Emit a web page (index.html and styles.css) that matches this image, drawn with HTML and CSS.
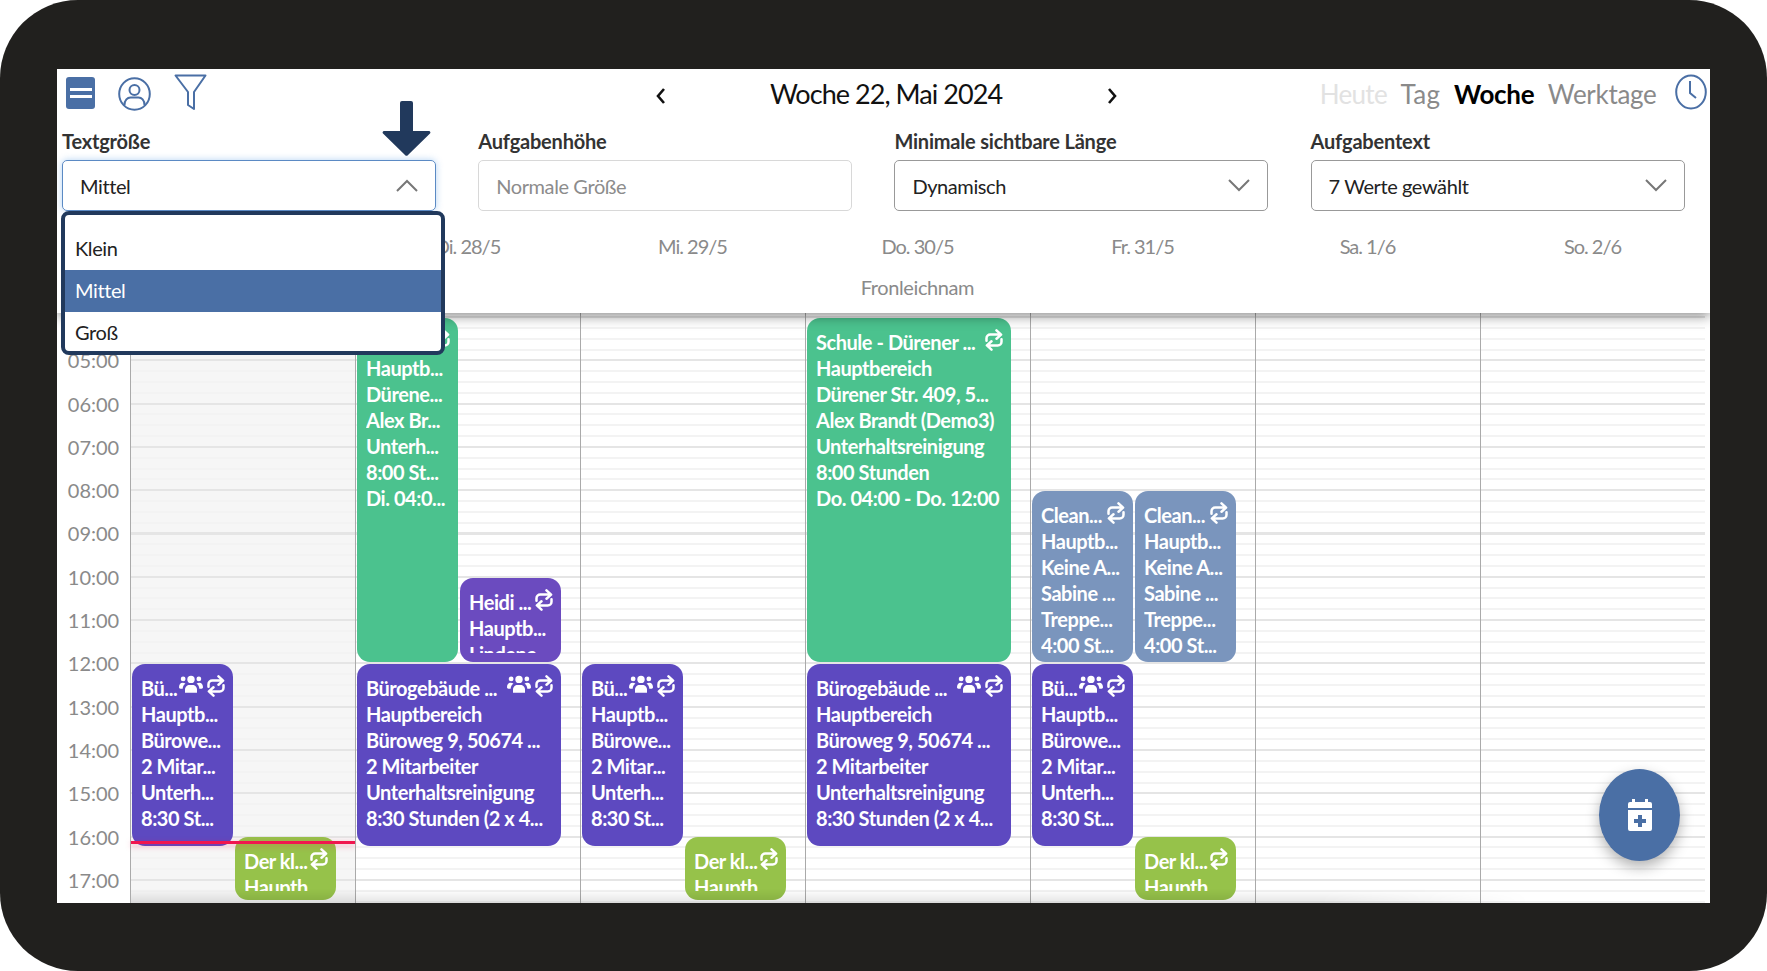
FILE: index.html
```html
<!DOCTYPE html>
<html lang="de">
<head>
    <meta charset="UTF-8">
    <meta name="viewport" content="width=device-width, initial-scale=1.0">
    <title>Kalender Woche 22</title>
    <link rel="stylesheet" href="styles.css">
</head>
<body>
    <svg class="defs" width="0" height="0">
        <symbol id="repeat" viewBox="0 0 24 26">
            <path d="M15 1.500l5.500 5-5.500 5M3 14v-3a4.500 4.500 0 0 1 4.500-4.500H19M9 24.500l-5.500-5 5.500-5M21 12v3a4.500 4.500 0 0 1-4.500 4.500H5" fill="none" stroke="currentColor" stroke-width="3" stroke-linecap="round" stroke-linejoin="round"/>
        </symbol>
        <symbol id="users" viewBox="0 0 26 20">
            <circle cx="13" cy="4.500" r="4"/>
            <circle cx="4.500" cy="4" r="2.600"/>
            <circle cx="21.500" cy="4" r="2.600"/>
            <path d="M6.500 19v-3.500c0-3 2.500-5 4.500-5h4c2 0 4.500 2 4.500 5V19z"/>
            <path d="M0 13c0-3 1.500-5 4-5 1.200 0 2.200.4 3 1.100-1.800 1-3 3-3 5.400H1.500C.6 14.500 0 14 0 13zM26 13c0-3-1.500-5-4-5-1.200 0-2.200.4-3 1.100 1.800 1 3 3 3 5.400h2.500c.9 0 1.500-.5 1.500-1.500z"/>
        </symbol>
    </svg>

    <div class="device">
        <div class="app">
            <header class="header">
                <div class="topbar">
                    <div class="tools">
                        <button class="menu-btn"><span></span><span></span></button>
                        <svg class="profile" viewBox="0 0 33 34">
                            <ellipse cx="16.500" cy="17" rx="15.300" ry="15.800" fill="none" stroke="#4a6fa5" stroke-width="2"/>
                            <circle cx="16.500" cy="13" r="5" fill="none" stroke="#4a6fa5" stroke-width="2"/>
                            <path d="M6.500 28c0-5 3-7.500 6-7.500h8c3 0 6 2.500 6 7.500" fill="none" stroke="#4a6fa5" stroke-width="2"/>
                        </svg>
                        <svg class="funnel" viewBox="0 0 33 37">
                            <path d="M1.500 1.500h30L20 18v17l-6-4V18z" fill="none" stroke="#4a6fa5" stroke-width="2" stroke-linejoin="round"/>
                        </svg>
                    </div>
                    <div class="week-nav">
                        <svg class="nav-arrow" viewBox="0 0 12 18"><path d="M9 2L3 9l6 7" fill="none" stroke="#111" stroke-width="2.600"/></svg>
                        <div class="week-title">Woche 22, Mai 2024</div>
                        <svg class="nav-arrow" viewBox="0 0 12 18"><path d="M3 2l6 7-6 7" fill="none" stroke="#111" stroke-width="2.600"/></svg>
                    </div>
                    <div class="views">
                        <span class="view view-off">Heute</span>
                        <span class="view view-tag">Tag</span>
                        <span class="view view-on">Woche</span>
                        <span class="view">Werktage</span>
                        <svg class="clock" viewBox="0 0 32 36">
                            <ellipse cx="16" cy="18" rx="14.800" ry="16.500" fill="none" stroke="#4a6fa5" stroke-width="2"/>
                            <path d="M15 7v12l6 5" fill="none" stroke="#4a6fa5" stroke-width="2"/>
                        </svg>
                    </div>
                </div>

                <div class="filters">
                    <div class="filter">
                        <label>Textgröße</label>
                        <div class="select select-open">
                            <span>Mittel</span>
                            <svg class="chevron" viewBox="0 0 22 13"><path d="M1 12L11 2l10 10" fill="none" stroke="#777" stroke-width="2"/></svg>
                        </div>
                    </div>
                    <div class="filter">
                        <label>Aufgabenhöhe</label>
                        <div class="select select-disabled"><span>Normale Größe</span></div>
                    </div>
                    <div class="filter">
                        <label>Minimale sichtbare Länge</label>
                        <div class="select">
                            <span>Dynamisch</span>
                            <svg class="chevron" viewBox="0 0 22 13"><path d="M1 1l10 10L21 1" fill="none" stroke="#777" stroke-width="2"/></svg>
                        </div>
                    </div>
                    <div class="filter">
                        <label>Aufgabentext</label>
                        <div class="select">
                            <span>7 Werte gewählt</span>
                            <svg class="chevron" viewBox="0 0 22 13"><path d="M1 1l10 10L21 1" fill="none" stroke="#777" stroke-width="2"/></svg>
                        </div>
                    </div>
                </div>

                <div class="day-heads">
                    <div></div>
                    <div class="day-head">Mo. 27/5</div>
                    <div class="day-head">Di. 28/5</div>
                    <div class="day-head">Mi. 29/5</div>
                    <div class="day-head">Do. 30/5<small>Fronleichnam</small></div>
                    <div class="day-head">Fr. 31/5</div>
                    <div class="day-head">Sa. 1/6</div>
                    <div class="day-head">So. 2/6</div>
                </div>
            </header>

            <div class="calendar">
                <div class="hours">
                    <div class="hour">04:00</div>
                    <div class="hour">05:00</div>
                    <div class="hour">06:00</div>
                    <div class="hour">07:00</div>
                    <div class="hour">08:00</div>
                    <div class="hour">09:00</div>
                    <div class="hour">10:00</div>
                    <div class="hour">11:00</div>
                    <div class="hour">12:00</div>
                    <div class="hour">13:00</div>
                    <div class="hour">14:00</div>
                    <div class="hour">15:00</div>
                    <div class="hour">16:00</div>
                    <div class="hour">17:00</div>
                </div>

                <div class="day day-past">
                    <div class="event purple half slot-office">
                        <div class="event-body">
                            <div class="event-head"><span>Bü...</span><svg class="ico-users"><use href="#users"/></svg><svg class="ico-repeat"><use href="#repeat"/></svg></div>
                            <div>Hauptb...</div><div>Bürowe...</div><div>2 Mitar...</div><div>Unterh...</div><div>8:30 St...</div>
                        </div>
                    </div>
                    <div class="event lime half right slot-late">
                        <div class="event-body">
                            <div class="event-head"><span>Der kl...</span><svg class="ico-repeat"><use href="#repeat"/></svg></div>
                            <div>Haupth</div>
                        </div>
                    </div>
                    <div class="now-line"></div>
                </div>

                <div class="day">
                    <div class="event green half slot-school">
                        <div class="event-body">
                            <div class="event-head"><span>Schul...</span><svg class="ico-repeat"><use href="#repeat"/></svg></div>
                            <div>Hauptb...</div><div>Dürene...</div><div>Alex Br...</div><div>Unterh...</div><div>8:00 St...</div><div>Di. 04:0...</div>
                        </div>
                    </div>
                    <div class="event violet half right slot-heidi">
                        <div class="event-body">
                            <div class="event-head"><span>Heidi ...</span><svg class="ico-repeat"><use href="#repeat"/></svg></div>
                            <div>Hauptb...</div><div>Lindene</div>
                        </div>
                    </div>
                    <div class="event purple wide slot-office">
                        <div class="event-body">
                            <div class="event-head"><span>Bürogebäude ...</span><svg class="ico-users"><use href="#users"/></svg><svg class="ico-repeat"><use href="#repeat"/></svg></div>
                            <div>Hauptbereich</div><div>Büroweg 9, 50674 ...</div><div>2 Mitarbeiter</div><div>Unterhaltsreinigung</div><div>8:30 Stunden (2 x 4...</div>
                        </div>
                    </div>
                </div>

                <div class="day">
                    <div class="event purple half slot-office">
                        <div class="event-body">
                            <div class="event-head"><span>Bü...</span><svg class="ico-users"><use href="#users"/></svg><svg class="ico-repeat"><use href="#repeat"/></svg></div>
                            <div>Hauptb...</div><div>Bürowe...</div><div>2 Mitar...</div><div>Unterh...</div><div>8:30 St...</div>
                        </div>
                    </div>
                    <div class="event lime half right slot-late">
                        <div class="event-body">
                            <div class="event-head"><span>Der kl...</span><svg class="ico-repeat"><use href="#repeat"/></svg></div>
                            <div>Haupth</div>
                        </div>
                    </div>
                </div>

                <div class="day">
                    <div class="event green wide slot-school">
                        <div class="event-body">
                            <div class="event-head"><span>Schule - Dürener ...</span><svg class="ico-repeat"><use href="#repeat"/></svg></div>
                            <div>Hauptbereich</div><div>Dürener Str. 409, 5...</div><div>Alex Brandt (Demo3)</div><div>Unterhaltsreinigung</div><div>8:00 Stunden</div><div>Do. 04:00 - Do. 12:00</div>
                        </div>
                    </div>
                    <div class="event purple wide slot-office">
                        <div class="event-body">
                            <div class="event-head"><span>Bürogebäude ...</span><svg class="ico-users"><use href="#users"/></svg><svg class="ico-repeat"><use href="#repeat"/></svg></div>
                            <div>Hauptbereich</div><div>Büroweg 9, 50674 ...</div><div>2 Mitarbeiter</div><div>Unterhaltsreinigung</div><div>8:30 Stunden (2 x 4...</div>
                        </div>
                    </div>
                </div>

                <div class="day">
                    <div class="event steel half slot-clean">
                        <div class="event-body">
                            <div class="event-head"><span>Clean...</span><svg class="ico-repeat"><use href="#repeat"/></svg></div>
                            <div>Hauptb...</div><div>Keine A...</div><div>Sabine ...</div><div>Treppe...</div><div>4:00 St...</div>
                        </div>
                    </div>
                    <div class="event steel half right slot-clean">
                        <div class="event-body">
                            <div class="event-head"><span>Clean...</span><svg class="ico-repeat"><use href="#repeat"/></svg></div>
                            <div>Hauptb...</div><div>Keine A...</div><div>Sabine ...</div><div>Treppe...</div><div>4:00 St...</div>
                        </div>
                    </div>
                    <div class="event purple half slot-office">
                        <div class="event-body">
                            <div class="event-head"><span>Bü...</span><svg class="ico-users"><use href="#users"/></svg><svg class="ico-repeat"><use href="#repeat"/></svg></div>
                            <div>Hauptb...</div><div>Bürowe...</div><div>2 Mitar...</div><div>Unterh...</div><div>8:30 St...</div>
                        </div>
                    </div>
                    <div class="event lime half right slot-late">
                        <div class="event-body">
                            <div class="event-head"><span>Der kl...</span><svg class="ico-repeat"><use href="#repeat"/></svg></div>
                            <div>Haupth</div>
                        </div>
                    </div>
                </div>

                <div class="day"></div>
                <div class="day"></div>
            </div>

            <ul class="dropdown">
                <li>Klein</li>
                <li class="selected">Mittel</li>
                <li>Groß</li>
            </ul>

            <svg class="hint-arrow" viewBox="0 0 49 55">
                <path d="M18 2a2 2 0 0 1 2-2h9a2 2 0 0 1 2 2v28h16a1.500 1.500 0 0 1 1 2.500L26 54a2 2 0 0 1-3 0L1 32.500A1.500 1.500 0 0 1 2 30h16z" fill="#21395c"/>
            </svg>

            <button class="fab">
                <svg viewBox="0 0 24 32" width="24" height="32">
                    <path d="M4 0h3v3h10V0h3v3h2a2 2 0 0 1 2 2v4H0V5a2 2 0 0 1 2-2h2z" fill="#fff"/>
                    <path d="M0 11h24v19a2 2 0 0 1-2 2H2a2 2 0 0 1-2-2zm10 5v4H6v4h4v4h4v-4h4v-4h-4v-4z" fill="#fff" fill-rule="evenodd"/>
                </svg>
            </button>
        </div>
    </div>
</body>
</html>
```

FILE: styles.css
```css
body {
    margin: 0;
    background-color: #fff;
    font-family: Lato, "Open Sans", sans-serif;
    overflow: hidden;
}
.defs {
    position: absolute;
}
.device {
    width: 1767px;
    height: 971px;
    box-sizing: border-box;
    padding: 69px 57px 68px 57px;
    background-color: #21201e;
    border-radius: 78px;
}
.app {
    position: relative;
    height: 834px;
    display: flex;
    flex-direction: column;
    overflow: hidden;
    background-color: #fff;
}
.app::after {
    content: "";
    position: absolute;
    z-index: 1;
    left: 74px;
    right: 180px;
    bottom: 0;
    height: 14px;
    background: linear-gradient(to bottom, transparent, rgba(0, 0, 0, 0.1));
    mask-image: linear-gradient(to right, #000 85%, transparent);
}

/* header */
.header {
    position: relative;
    z-index: 2;
    height: 244px;
    flex: none;
    background-color: #fff;
    box-shadow: 0 3px 12px rgba(0, 0, 0, 0.45);
}
.topbar {
    height: 60px;
    display: grid;
    grid-template-columns: 1fr 470px 1fr;
    align-items: start;
}
.tools {
    display: flex;
    align-items: flex-start;
    padding: 5px 0 0 9px;
    box-sizing: border-box;
}
.menu-btn {
    width: 29px;
    height: 32px;
    padding: 0;
    margin-top: 3px;
    border: none;
    border-radius: 3px;
    background-color: #4a6fa5;
    display: flex;
    flex-direction: column;
    justify-content: center;
    align-items: center;
    gap: 4px;
}
.menu-btn span {
    width: 22px;
    height: 3px;
    background-color: #fff;
}
.profile {
    width: 33px;
    height: 34px;
    margin: 3px 0 0 23px;
}
.funnel {
    width: 33px;
    height: 37px;
    margin-left: 23px;
}
.week-nav {
    display: flex;
    justify-content: space-between;
    align-items: center;
    padding: 9px 1px 0 6px;
}
.nav-arrow {
    width: 12px;
    height: 18px;
    margin-top: 3px;
}
.week-title {
    font-size: 27px;
    line-height: 32px;
    letter-spacing: -0.95px;
    color: #111;
}
.views {
    display: flex;
    justify-content: flex-end;
    align-items: flex-start;
    gap: 13.5px;
    padding: 9px 3px 0 0;
    font-size: 26px;
    line-height: 32px;
    letter-spacing: -0.3px;
}
.view {
    color: #8a8a8a;
}
.view-off {
    color: #e2e2e2;
    letter-spacing: -0.7px;
}
.view-tag {
    letter-spacing: 0.4px;
}
.view-on {
    color: #000;
    font-weight: 700;
}
.clock {
    width: 32px;
    height: 36px;
    margin: -4px 0 0 5px;
}

/* filters */
.filters {
    display: grid;
    grid-template-columns: repeat(4, 374px);
    column-gap: 42.2px;
    padding-left: 5px;
}
.filter label {
    display: block;
    height: 24px;
    line-height: 24px;
    margin-bottom: 7px;
    font-size: 20px;
    font-weight: 700;
    letter-spacing: -0.2px;
    color: #333;
}
.select {
    height: 51px;
    box-sizing: border-box;
    padding: 0 17px;
    display: flex;
    align-items: center;
    justify-content: space-between;
    border: 1px solid #999;
    border-radius: 5px;
    font-size: 20px;
    letter-spacing: -0.4px;
    color: #222;
}
.select-open {
    border-color: #5b8ac4;
    box-shadow: 0 0 7px rgba(90, 160, 230, 0.45);
}
.select-disabled {
    border-color: #d8d8d8;
    color: #8c8c8c;
}
.chevron {
    width: 22px;
    height: 13px;
}

/* day headers */
.day-heads {
    display: grid;
    grid-template-columns: 73px repeat(7, 225px);
    padding-top: 23px;
    font-size: 20px;
    letter-spacing: -1px;
    color: #8a8a8a;
    text-align: center;
}
.day-head {
    line-height: 24px;
}
.day-head small {
    display: block;
    margin-top: 17px;
    font-size: 20px;
    letter-spacing: -0.4px;
}

/* calendar */
.calendar {
    position: relative;
    flex: 1;
    display: grid;
    grid-template-columns: 73px repeat(7, 225px);
    overflow: hidden;
}
.hours {
    margin-top: -17px;
    font-size: 20px;
    color: #8a8a8a;
    text-align: center;
}
.hour {
    height: 43.3px;
    line-height: 43.3px;
}
.day {
    position: relative;
    box-sizing: border-box;
    border-left: 1px solid #aaa;
    background-image:
        repeating-linear-gradient(to bottom, #e5e5e5 -40.3px, #e5e5e5 -38.3px, transparent -38.3px, transparent 3px),
        repeating-linear-gradient(to bottom, #f3f3f3 -7.8px, #f3f3f3 -5.8px, transparent -5.8px, transparent 3.025px);
}
.day-past {
    background-color: #f6f6f6;
}
.event {
    position: absolute;
    box-sizing: border-box;
    padding: 11px 8px 9px 9px;
    border-radius: 13px;
    color: #fff;
    font-size: 20px;
    font-weight: 700;
    line-height: 26px;
    letter-spacing: -0.45px;
    white-space: nowrap;
}
.event-body {
    height: 100%;
    overflow: hidden;
}
.event-head {
    display: flex;
    align-items: flex-start;
}
.event-head span {
    flex: 1;
}
.ico-repeat {
    width: 20px;
    height: 22px;
    margin: 0 -1px 0 0;
    flex: none;
}
.ico-users {
    width: 24px;
    height: 19px;
    margin: 0 3px 0 0;
    fill: #fff;
    flex: none;
}
.half {
    left: 1px;
    width: 101px;
}
.half.right {
    left: 104px;
    width: 101px;
}
.wide {
    left: 1px;
    width: 204px;
}
.slot-school {
    top: 5px;
    height: 344px;
}
.slot-clean {
    top: 178px;
    height: 171px;
}
.slot-heidi {
    top: 265px;
    height: 84px;
}
.slot-office {
    top: 351px;
    height: 182px;
}
.slot-late {
    top: 524px;
    height: 63px;
}
.green {
    background-color: #4bc28e;
}
.purple {
    background-color: #5d49c0;
}
.violet {
    background-color: #6b4bbf;
}
.steel {
    background-color: #7a95bd;
}
.lime {
    background-color: #96c24a;
}
.now-line {
    position: absolute;
    left: 0;
    right: 0;
    top: 528px;
    height: 3px;
    background-color: #f0164f;
    box-shadow: 0 2px 6px rgba(240, 22, 79, 0.35);
}

/* overlays */
.dropdown {
    position: absolute;
    z-index: 3;
    left: 4px;
    top: 142px;
    width: 384px;
    height: 144px;
    box-sizing: border-box;
    margin: 0;
    padding: 12px 0 0 0;
    list-style: none;
    overflow: hidden;
    background-color: #fff;
    border: 4px solid #21395c;
    border-radius: 8px;
    font-size: 20px;
    letter-spacing: -0.4px;
    color: #222;
}
.dropdown li {
    height: 42px;
    line-height: 40px;
    padding-left: 10px;
}
.dropdown li:first-child {
    height: 43px;
    line-height: 42px;
}
.dropdown .selected {
    background-color: #4a6fa5;
    color: #fff;
}
.hint-arrow {
    position: absolute;
    z-index: 3;
    left: 325px;
    top: 32px;
    width: 49px;
    height: 55px;
}
.fab {
    position: absolute;
    z-index: 3;
    left: 1542px;
    top: 700px;
    width: 81px;
    height: 92px;
    padding: 0;
    border: none;
    border-radius: 50%;
    background-color: #4a6fa5;
    box-shadow: 0 6px 14px rgba(0, 0, 0, 0.3);
    display: flex;
    align-items: center;
    justify-content: center;
}
```
